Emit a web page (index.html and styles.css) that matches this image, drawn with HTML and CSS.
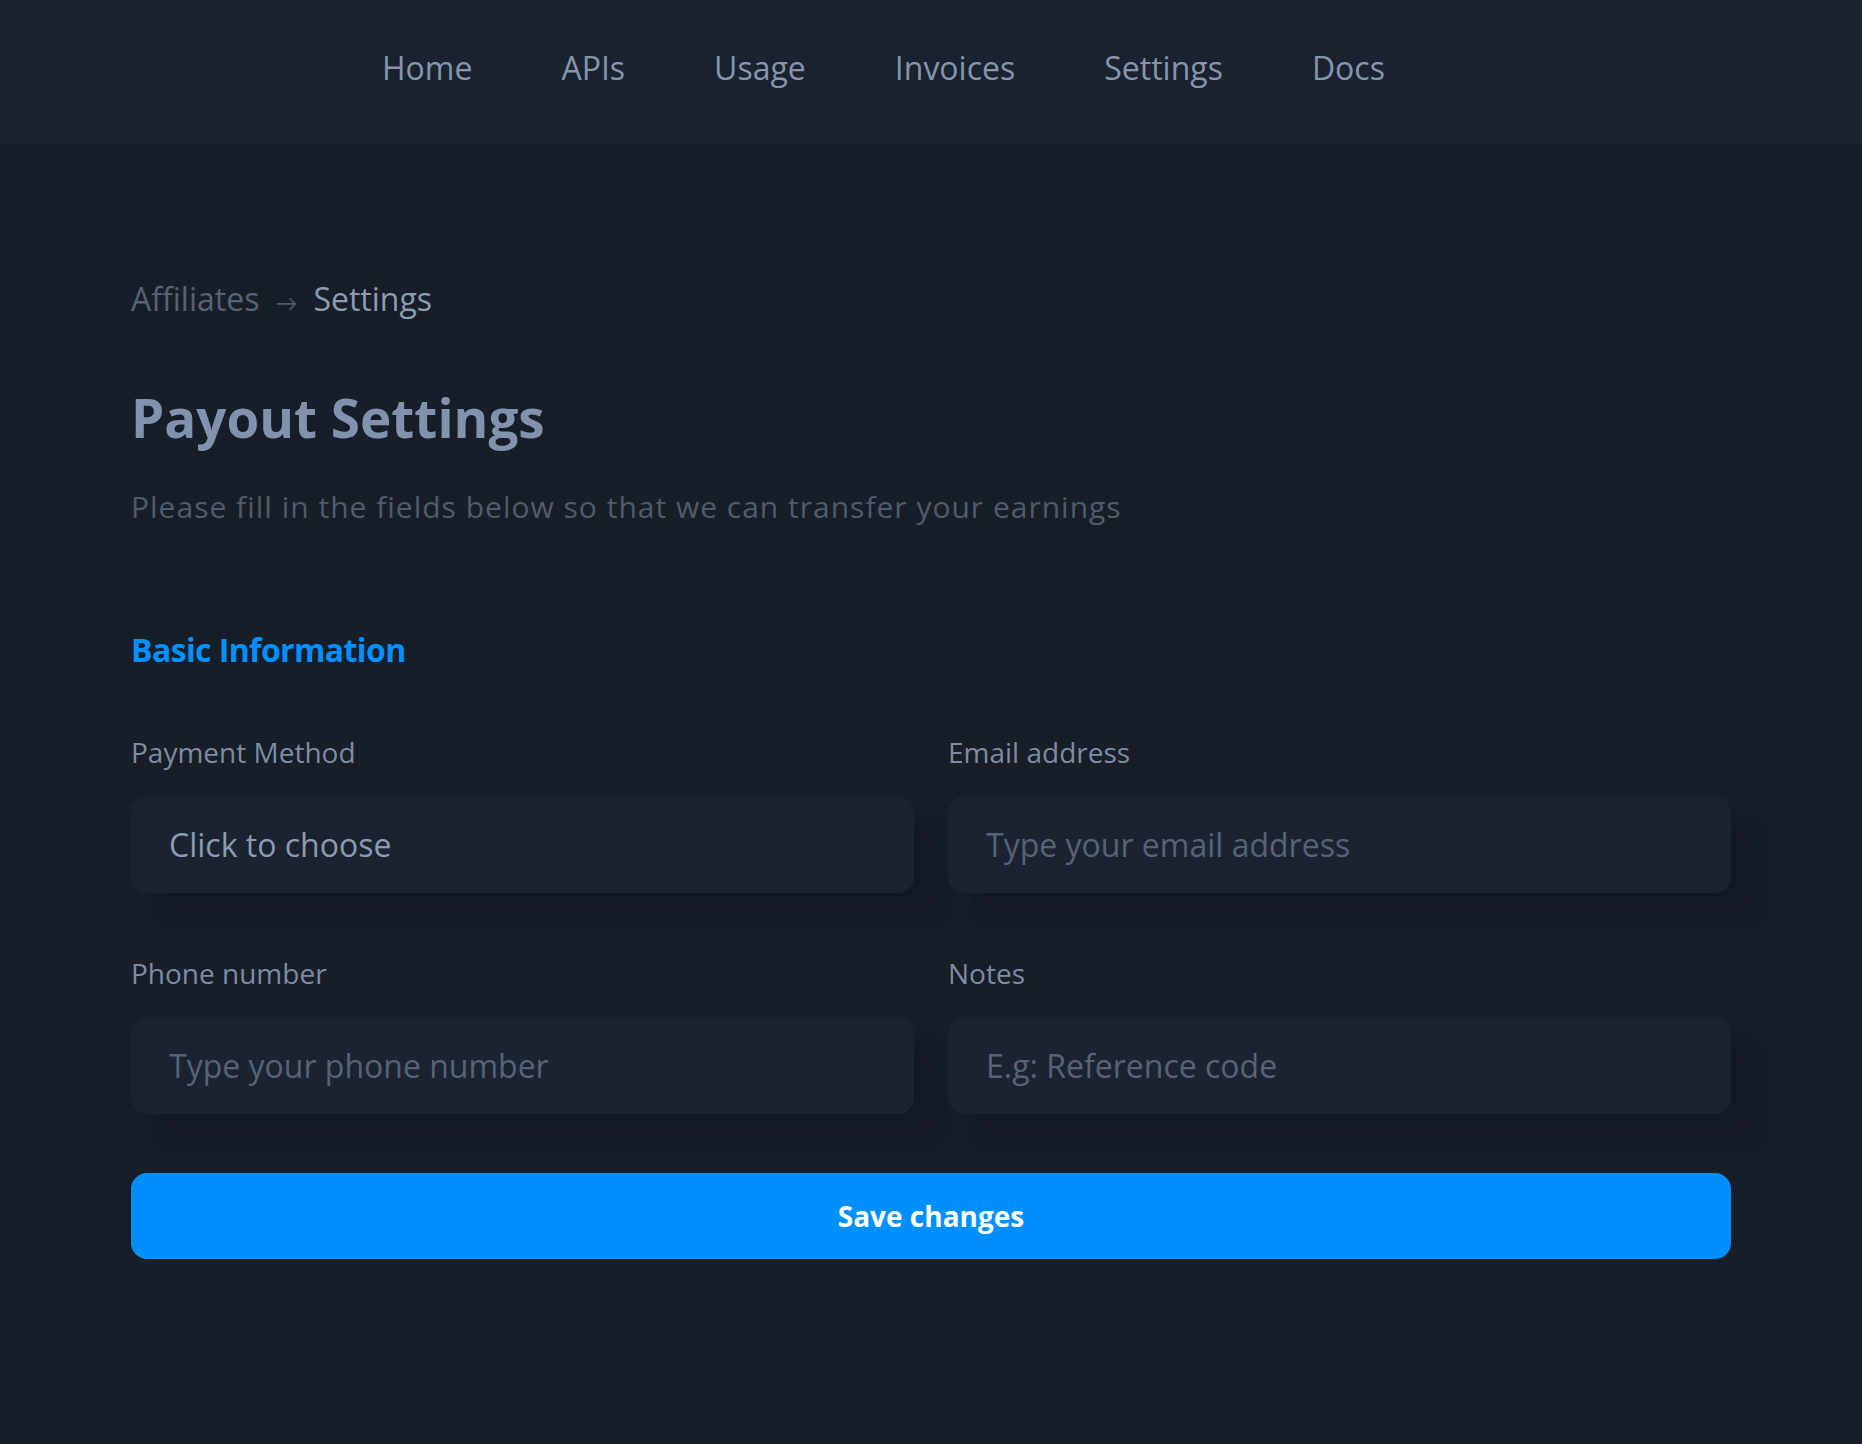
FILE: index.html
```html
<!DOCTYPE html>
<html lang="en">
<head>
<meta charset="utf-8">
<title>Payout Settings</title>
<link rel="stylesheet" href="styles.css">
</head>
<body>
<header class="topbar">
  <nav class="nav">
    <a class="nav-link" href="#">Home</a>
    <a class="nav-link" href="#">APIs</a>
    <a class="nav-link" href="#">Usage</a>
    <a class="nav-link" href="#">Invoices</a>
    <a class="nav-link" href="#">Settings</a>
    <a class="nav-link" href="#">Docs</a>
  </nav>
</header>
<main class="page">
  <div class="breadcrumb">
    <span class="crumb-muted">Affiliates</span>
    <span class="crumb-arrow">&#8594;</span>
    <span class="crumb-current">Settings</span>
  </div>
  <h1 class="title">Payout Settings</h1>
  <p class="subtitle">Please fill in the fields below so that we can transfer your earnings</p>
  <h2 class="section-title">Basic Information</h2>
  <form class="form">
    <div class="grid">
      <div class="field">
        <label class="label">Payment Method</label>
        <div class="input input-value">Click to choose</div>
      </div>
      <div class="field">
        <label class="label">Email address</label>
        <div class="input input-placeholder">Type your email address</div>
      </div>
      <div class="field">
        <label class="label">Phone number</label>
        <div class="input input-placeholder">Type your phone number</div>
      </div>
      <div class="field">
        <label class="label">Notes</label>
        <div class="input input-placeholder">E.g: Reference code</div>
      </div>
    </div>
    <button type="button" class="save">Save changes</button>
  </form>
</main>
</body>
</html>
```

FILE: styles.css
```css
* { box-sizing: border-box; }
html, body { margin: 0; padding: 0; }
body {
  background: #171e28;
  font-family: "Open Sans", "Lato", sans-serif;
  color: #8595ac;
  min-height: 1444px;
}
.topbar {
  height: 144px;
  background: #1a2230;
  display: flex;
  align-items: center;
  padding-bottom: 8px;
}
.nav {
  display: flex;
  gap: 89px;
  padding-left: 382px;
}
.nav-link {
  font-size: 32px;
  line-height: 1.2;
  color: #8595ac;
  text-decoration: none;
}
.page {
  width: 1600px;
  margin: 0 auto;
  padding-top: 136px;
}
.breadcrumb {
  display: flex;
  align-items: baseline;
  gap: 16px;
  font-size: 32px;
  line-height: 1.2;
}
.crumb-muted { color: #566275; }
.crumb-arrow { color: #4d5868; font-size: 22px; }
.crumb-current { color: #8c9cb3; }
.title {
  margin: 68px 0 0;
  font-size: 53px;
  line-height: 1.2;
  font-weight: 700;
  color: #8092ad;
}
.subtitle {
  margin: 39px 0 0;
  font-size: 30px;
  line-height: 1.2;
  letter-spacing: 1px;
  color: #4f5b6d;
}
.section-title {
  margin: 106px 0 0;
  font-size: 32px;
  line-height: 1.2;
  letter-spacing: -0.6px;
  font-weight: 700;
  color: #0090ff;
}
.form { margin-top: 67px; }
.grid {
  display: grid;
  grid-template-columns: 1fr 1fr;
  column-gap: 34px;
  row-gap: 64px;
}
.field { display: flex; flex-direction: column; gap: 26px; }
.label {
  font-size: 28px;
  line-height: 1.2;
  color: #7d8ca2;
}
.input {
  height: 97px;
  border-radius: 16px;
  background: #1b2331;
  box-shadow: 28px 28px 14px rgba(8, 11, 16, 0.22);
  display: flex;
  align-items: center;
  padding-left: 38px;
  font-size: 32px;
}
.input-value { color: #8a9bb2; }
.input-placeholder { color: #566276; }
.save {
  display: block;
  width: 100%;
  margin-top: 59px;
  height: 86px;
  border: 0;
  border-radius: 16px;
  background: #008fff;
  color: #ffffff;
  font-family: inherit;
  font-size: 28px;
  font-weight: 700;
}
```
